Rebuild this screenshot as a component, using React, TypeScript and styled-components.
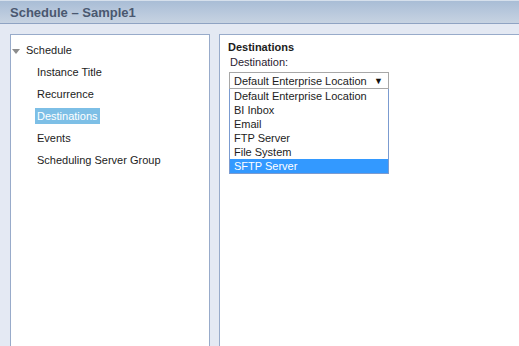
import styled, { createGlobalStyle } from 'styled-components';

const GlobalStyle = createGlobalStyle`
  html, body {
    margin: 0;
    padding: 0;
    height: 100%;
    overflow: hidden;
    background: #e4e9f3;
  }
  #root {
    height: 100%;
  }
`;

const Page = styled.div`
  height: 100vh;
  display: flex;
  flex-direction: column;
  font-family: 'Liberation Sans', Arial, sans-serif;
  font-size: 11px;
  color: #1c1c1c;
`;

const TitleBar = styled.div`
  flex: none;
  display: flex;
  align-items: center;
  padding-left: 10px;
  border-top: 1px solid #d6e0ec;
  border-bottom: 1px solid #8fa3c3;
  background: linear-gradient(#a9bdd6, #c7d3e2);
  box-sizing: border-box;
  height: 24px;
  font-size: 13px;
  font-weight: bold;
  color: #4a5870;
`;

const Body = styled.div`
  flex: 1;
  display: flex;
  gap: 9px;
  padding: 10px 0 0 10px;
  min-height: 0;
`;

const Panel = styled.div<{ $width?: number }>`
  background: #fff;
  border: 1px solid #98abca;
  border-bottom: none;
  ${(p) => (p.$width ? `width: ${p.$width}px; flex: none;` : 'flex: 1; border-right: none;')}
  box-sizing: border-box;
`;

const Tree = styled.ul`
  list-style: none;
  margin: 0;
  padding: 7px 0 0 0;
`;

const RootNode = styled.li`
  display: flex;
  align-items: center;
  height: 16px;
  padding-left: 1px;
  margin-bottom: 6px;
`;

const Caret = styled.span`
  width: 0;
  height: 0;
  border-left: 4px solid transparent;
  border-right: 4px solid transparent;
  border-top: 5px solid #8c8c8c;
  margin: 2px 6px 0 0;
`;

const TreeItem = styled.li<{ $selected?: boolean }>`
  height: 16px;
  line-height: 16px;
  margin: 0 0 6px 24px;
  padding: 0 2px;
  width: fit-content;
  background: ${(p) => (p.$selected ? '#7dbfe6' : 'transparent')};
  color: ${(p) => (p.$selected ? '#fff' : '#1c1c1c')};
`;

const Content = styled.div`
  padding: 5px 0 0 8px;
`;

const Heading = styled.div`
  font-weight: bold;
  height: 14px;
  line-height: 14px;
`;

const Label = styled.div`
  height: 14px;
  line-height: 14px;
  margin: 1px 0 0 2px;
  color: #2a2230;
`;

const Dropdown = styled.div`
  width: 160px;
  margin: 3px 0 0 1px;
`;

const SelectBox = styled.div`
  height: 17px;
  box-sizing: border-box;
  border: 1px solid #a7a7a7;
  display: flex;
  align-items: center;
  justify-content: space-between;
  padding: 0 5px 0 4px;
`;

const Arrow = styled.span`
  font-size: 9px;
  color: #111;
`;

const OptionList = styled.ul`
  list-style: none;
  margin: 0;
  padding: 0;
  border: 1px solid #7b9bd0;
  border-top: none;
`;

const Option = styled.li<{ $active?: boolean }>`
  height: 14px;
  line-height: 14px;
  padding-left: 4px;
  background: ${(p) => (p.$active ? '#3399ff' : '#fff')};
  color: ${(p) => (p.$active ? '#fff' : '#1c1c1c')};
`;

const steps = ['Instance Title', 'Recurrence', 'Destinations', 'Events', 'Scheduling Server Group'];
const destinations = ['Default Enterprise Location', 'BI Inbox', 'Email', 'FTP Server', 'File System', 'SFTP Server'];

export default function App() {
  return (
    <Page>
      <GlobalStyle />
      <TitleBar>Schedule – Sample1</TitleBar>
      <Body>
        <Panel $width={200}>
          <Tree>
            <RootNode>
              <Caret />
              Schedule
            </RootNode>
            {steps.map((s) => (
              <TreeItem key={s} $selected={s === 'Destinations'}>
                {s}
              </TreeItem>
            ))}
          </Tree>
        </Panel>
        <Panel>
          <Content>
            <Heading>Destinations</Heading>
            <Label>Destination:</Label>
            <Dropdown>
              <SelectBox>
                Default Enterprise Location
                <Arrow>▼</Arrow>
              </SelectBox>
              <OptionList>
                {destinations.map((d) => (
                  <Option key={d} $active={d === 'SFTP Server'}>
                    {d}
                  </Option>
                ))}
              </OptionList>
            </Dropdown>
          </Content>
        </Panel>
      </Body>
    </Page>
  );
}
